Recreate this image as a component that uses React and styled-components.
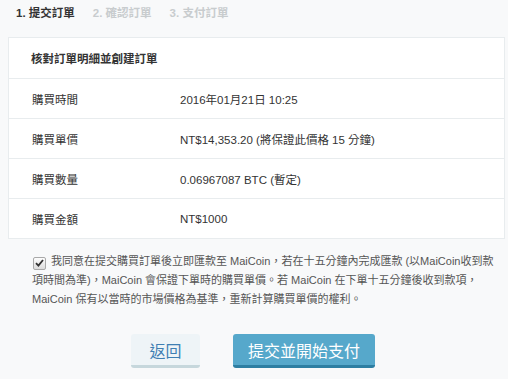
import React, { useState } from 'react';
import styled, { createGlobalStyle } from 'styled-components';

const GlobalStyle = createGlobalStyle`
  html, body {
    margin: 0;
    padding: 0;
    background-color: #f8f9fa;
    font-family: "Liberation Sans", "Noto Sans CJK TC", sans-serif;
    color: #333;
  }
`;

const Page = styled.div`
  padding: 2px 4px 0 8px;
`;

const Steps = styled.div`
  display: flex;
  gap: 18px;
  padding-left: 8px;
  height: 20px;
  align-items: center;
  margin-bottom: 15px;
`;

const Step = styled.span`
  font-size: 11.5px;
  font-weight: bold;
  color: ${props => (props.active ? '#333' : '#c8ccce')};
`;

const Card = styled.div`
  background-color: #fff;
  border: 1px solid #e8ecee;
  width: 495px;
`;

const CardHeader = styled.div`
  height: 40px;
  display: flex;
  align-items: center;
  padding-left: 22px;
  font-size: 11.5px;
  font-weight: bold;
  border-bottom: 1px solid #e8ecee;
`;

const Row = styled.div`
  height: 39px;
  display: flex;
  align-items: center;
  font-size: 11.5px;
  border-top: ${props => (props.first ? 'none' : '1px solid #e8ecee')};
`;

const Label = styled.div`
  width: 148px;
  padding-left: 23px;
`;

const Value = styled.div`
  color: #333;
`;

const Agree = styled.label`
  display: block;
  margin: 13px 3px 0 24px;
  font-size: 11px;
  line-height: 19px;
  color: #555;
  cursor: pointer;
`;

const HiddenInput = styled.input`
  display: none;
`;

const Box = styled.span`
  display: inline-flex;
  align-items: center;
  justify-content: center;
  width: 11px;
  height: 11px;
  margin: 0 5px 0 1px;
  vertical-align: -2px;
  border: 1px solid #a9a9a9;
  border-radius: 2px;
  background: linear-gradient(#fdfdfd, #dcdcdc);
`;

const Buttons = styled.div`
  display: flex;
  justify-content: center;
  gap: 33px;
  margin-top: 25px;
  padding-right: 6px;
`;

const Button = styled.button`
  height: 34px;
  width: ${props => props.width}px;
  padding: 0;
  border: none;
  border-radius: 3px;
  font-family: inherit;
  font-size: 16px;
  cursor: pointer;
  background-color: ${props => (props.primary ? '#56a8cb' : '#eef4f7')};
  color: ${props => (props.primary ? '#fff' : '#3f7fb3')};
  border-bottom: 3px solid ${props => (props.primary ? '#2d7ea2' : '#c6d7dc')};
`;

const rows = [
  ['購買時間', '2016年01月21日 10:25'],
  ['購買單價', 'NT$14,353.20 (將保證此價格 15 分鐘)'],
  ['購買數量', '0.06967087 BTC (暫定)'],
  ['購買金額', 'NT$1000'],
];

const App = () => {
  const [agreed, setAgreed] = useState(true);

  return (
    <Page>
      <GlobalStyle />
      <Steps>
        <Step active>1. 提交訂單</Step>
        <Step>2. 確認訂單</Step>
        <Step>3. 支付訂單</Step>
      </Steps>
      <Card>
        <CardHeader>核對訂單明細並創建訂單</CardHeader>
        {rows.map(([label, value], idx) => (
          <Row key={label} first={idx === 0}>
            <Label>{label}</Label>
            <Value>{value}</Value>
          </Row>
        ))}
      </Card>
      <Agree>
        <HiddenInput
          type="checkbox"
          checked={agreed}
          onChange={() => setAgreed(!agreed)}
        />
        <Box>
          {agreed && (
            <svg width="9" height="8" viewBox="0 0 9 8">
              <path d="M1 4.2 L3.4 6.6 L8 1" fill="none" stroke="#333" strokeWidth="1.8" />
            </svg>
          )}
        </Box>
        我同意在提交購買訂單後立即匯款至 MaiCoin，若在十五分鐘內完成匯款 (以MaiCoin收到款項時間為準)，MaiCoin 會保證下單時的購買單價。若 MaiCoin 在下單十五分鐘後收到款項，MaiCoin 保有以當時的市場價格為基準，重新計算購買單價的權利。
      </Agree>
      <Buttons>
        <Button width={69}>返回</Button>
        <Button primary width={142}>
          提交並開始支付
        </Button>
      </Buttons>
    </Page>
  );
};

export default App;
